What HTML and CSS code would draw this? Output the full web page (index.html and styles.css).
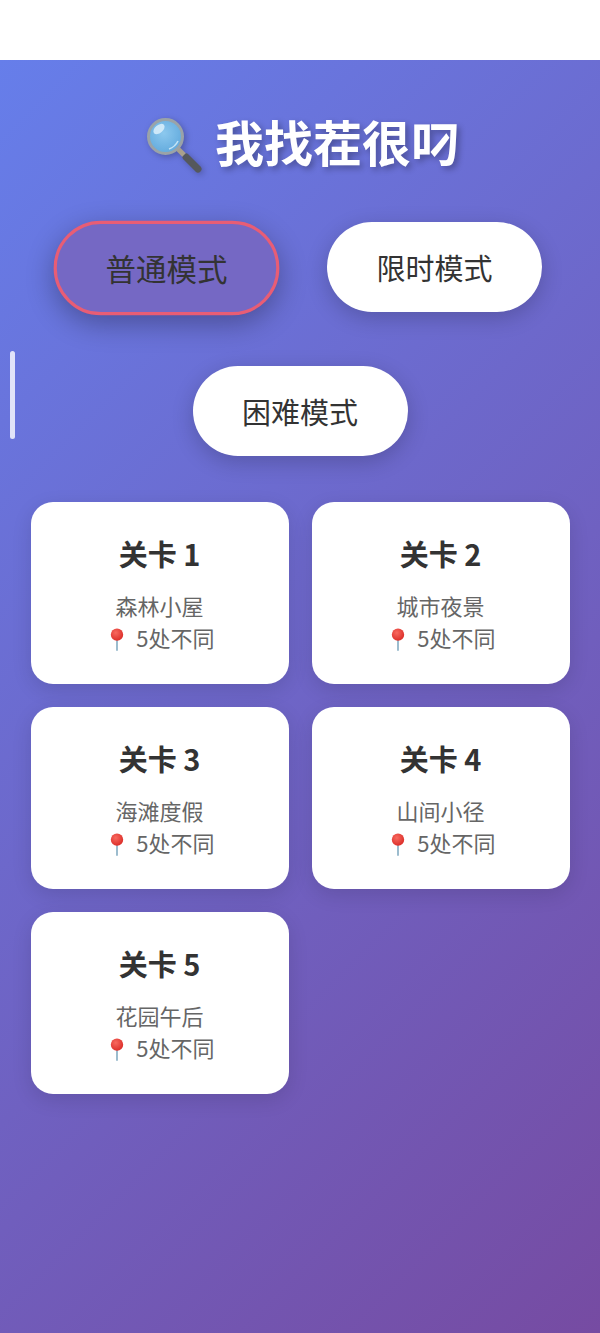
FILE: index.html
```html
<!DOCTYPE html>
<html lang="zh-CN">
<head>
    <meta charset="UTF-8">
    <meta name="viewport" content="width=device-width, initial-scale=1.0">
    <title>我找茬很叼</title>
    <link rel="stylesheet" href="styles.css">
</head>
<body>
    <div class="status-bar"></div>

    <div class="game-container">
        <div class="scroll-thumb"></div>

        <h1 class="title">
            <svg class="title-icon" viewBox="0 0 56 56" aria-hidden="true">
                <defs>
                    <radialGradient id="lens" cx="45%" cy="40%" r="65%">
                        <stop offset="0" stop-color="#8cc8ee"/>
                        <stop offset="1" stop-color="#5fa8dc"/>
                    </radialGradient>
                </defs>
                <line x1="40" y1="39" x2="52" y2="51" stroke="#55585c" stroke-width="7" stroke-linecap="round"/>
                <line x1="32" y1="31" x2="38" y2="37" stroke="#a9a08c" stroke-width="5"/>
                <circle cx="19.5" cy="18.5" r="17" fill="url(#lens)" stroke="#9aa3a8" stroke-width="3"/>
                <ellipse cx="13" cy="11" rx="6.5" ry="4" fill="#dcf0fb" opacity="0.85" transform="rotate(-40 13 11)"/>
                <path d="M23 31 Q29 29 32 23" stroke="#c4e4f6" stroke-width="1.6" fill="none"/>
            </svg>
            <span>我找茬很叼</span>
        </h1>

        <div class="mode-list">
            <button class="mode-btn active">普通模式</button>
            <button class="mode-btn">限时模式</button>
            <button class="mode-btn">困难模式</button>
        </div>

        <div class="level-grid">
            <div class="level-card">
                <h3>关卡 1</h3>
                <p>森林小屋</p>
                <p class="diff"><svg class="pin" viewBox="0 0 16 26" aria-hidden="true"><use href="#pin-shape"/></svg> 5处不同</p>
            </div>
            <div class="level-card">
                <h3>关卡 2</h3>
                <p>城市夜景</p>
                <p class="diff"><svg class="pin" viewBox="0 0 16 26" aria-hidden="true"><use href="#pin-shape"/></svg> 5处不同</p>
            </div>
            <div class="level-card">
                <h3>关卡 3</h3>
                <p>海滩度假</p>
                <p class="diff"><svg class="pin" viewBox="0 0 16 26" aria-hidden="true"><use href="#pin-shape"/></svg> 5处不同</p>
            </div>
            <div class="level-card">
                <h3>关卡 4</h3>
                <p>山间小径</p>
                <p class="diff"><svg class="pin" viewBox="0 0 16 26" aria-hidden="true"><use href="#pin-shape"/></svg> 5处不同</p>
            </div>
            <div class="level-card">
                <h3>关卡 5</h3>
                <p>花园午后</p>
                <p class="diff"><svg class="pin" viewBox="0 0 16 26" aria-hidden="true"><use href="#pin-shape"/></svg> 5处不同</p>
            </div>
        </div>
    </div>

    <svg class="defs" aria-hidden="true">
        <defs>
            <radialGradient id="pin-head" cx="40%" cy="35%" r="65%">
                <stop offset="0" stop-color="#f8695f"/>
                <stop offset="1" stop-color="#dc2f2a"/>
            </radialGradient>
            <g id="pin-shape">
                <rect x="7" y="13" width="2" height="13" rx="1" fill="#8fb4c8"/>
                <circle cx="8" cy="7.5" r="7" fill="url(#pin-head)"/>
            </g>
        </defs>
    </svg>
</body>
</html>
```

FILE: styles.css
```css
* {
    margin: 0;
    padding: 0;
    box-sizing: border-box;
}

body {
    font-family: "Noto Sans CJK SC", "Noto Sans", sans-serif;
    background: white;
    min-height: 100vh;
    display: flex;
    flex-direction: column;
}

.status-bar {
    height: 60px;
    background: white;
}

.game-container {
    position: relative;
    flex: 1;
    padding: 0 30px;
    background: linear-gradient(135deg, #667eea 0%, #764ba2 100%);
}

.scroll-thumb {
    position: absolute;
    left: 10px;
    top: 291px;
    width: 5px;
    height: 88px;
    border-radius: 3px;
    background: rgba(255, 255, 255, 0.8);
}

.title {
    display: flex;
    align-items: center;
    justify-content: center;
    gap: 13px;
    height: 60px;
    margin-top: 51px;
    padding-left: 6px;
    font-size: 49px;
    font-weight: 700;
    line-height: 60px;
    color: white;
    text-shadow: 3px 3px 6px rgba(0, 0, 0, 0.3);
}

.title-icon {
    width: 56px;
    height: 56px;
    margin-top: 10px;
    filter: drop-shadow(2px 2px 3px rgba(0, 0, 0, 0.25));
}

.mode-list {
    display: flex;
    flex-wrap: wrap;
    justify-content: center;
    gap: 54px;
    margin-top: 51px;
}

.mode-btn {
    width: 215px;
    height: 90px;
    border: 0;
    border-radius: 45px;
    background: white;
    color: #333;
    font-family: inherit;
    font-size: 29px;
    box-shadow: 0 6px 22px rgba(0, 0, 0, 0.2);
}

.mode-btn.active {
    background: #7568c4;
    border: 3px solid #e85d75;
    padding-bottom: 3px;
    transform: translate(1px, 1px) scale(1.05);
    box-shadow: 0 8px 26px rgba(0, 0, 0, 0.3);
}

.level-grid {
    display: grid;
    grid-template-columns: 258px 258px;
    gap: 23px;
    justify-content: center;
    margin-top: 46px;
}

.level-card {
    height: 182px;
    padding-top: 29px;
    border-radius: 22px;
    background: white;
    text-align: center;
    box-shadow: 0 6px 20px rgba(0, 0, 0, 0.12);
}

.level-card h3 {
    font-size: 29px;
    font-weight: 700;
    line-height: 44px;
    color: #333;
    margin-bottom: 15px;
}

.level-card p {
    font-size: 22px;
    line-height: 31.5px;
    color: #666;
}

.pin {
    width: 26px;
    height: 23px;
    margin-right: 1px;
    vertical-align: -4px;
}

.defs {
    position: absolute;
    width: 0;
    height: 0;
}
```
